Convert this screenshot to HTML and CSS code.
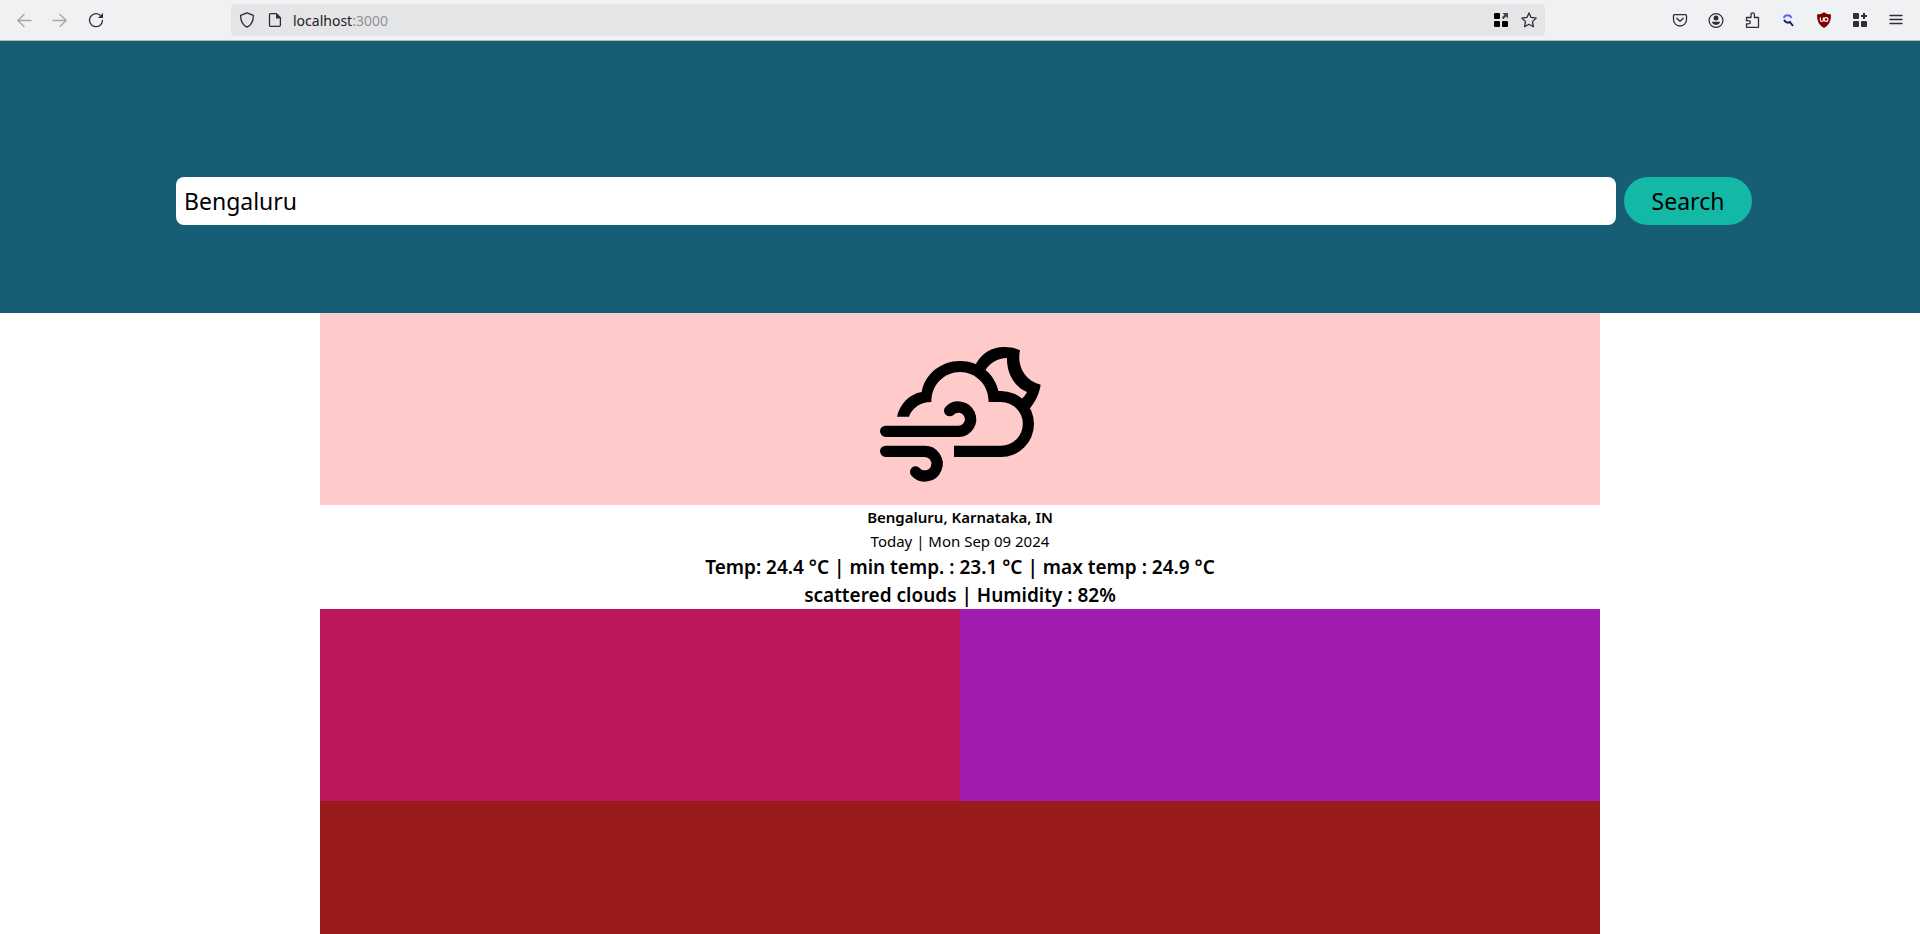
FILE: index.html
```
<!DOCTYPE html>
<html lang="en">
<head>
<meta charset="utf-8">
<title>Weather</title>
<link rel="stylesheet" href="styles.css">
</head>
<body>
<nav class="toolbar" aria-label="Browser toolbar">
  <div class="tool-group">
    <button class="tool faded" aria-label="Back"><svg viewBox="0 0 16 16"><path class="line" d="M15 8.500H1.800M8 2.500L1.800 8.500L8 14.500"/></svg></button>
    <button class="tool faded" aria-label="Forward"><svg viewBox="0 0 16 16"><path class="line" d="M1 8.500H14.200M8 2.500L14.200 8.500L8 14.500"/></svg></button>
    <button class="tool" aria-label="Reload"><svg viewBox="0 0 16 16"><path class="line" d="M12.200 3.200A6.500 6.500 0 1 0 14.500 8.500"/><path d="M15 1V6H10Z"/></svg></button>
  </div>
  <div class="urlbar">
    <button class="url-icon" aria-label="Tracking protection"><svg viewBox="0 0 16 16"><path class="line" d="M8 .8L14.4 3.4C14.4 9.2 12.4 13 8 15.2C3.6 13 1.6 9.2 1.6 3.4Z"/></svg></button>
    <button class="url-icon" aria-label="Site information"><svg viewBox="0 0 16 16"><path class="line" d="M3.6 1.7H9.5L13.4 5.6V13.3Q13.4 14.4 12.3 14.4H3.6Q2.5 14.4 2.5 13.3V2.8Q2.5 1.7 3.6 1.7Z"/><path d="M9 1.5V6.5H14Z"/></svg></button>
    <span class="address">localhost<span class="port">:3000</span></span>
    <button class="url-icon" aria-label="Open app"><svg class="solid" viewBox="0 0 16 16"><rect x="1" y="1" width="6" height="6" rx="1"/><rect x="1" y="9" width="6" height="6" rx="1"/><rect x="9" y="9" width="6" height="6" rx="1"/><path class="arrow" d="M9.5 1H15V6.5L13 4.6L10.4 7.2L8.8 5.6L11.4 3Z"/></svg></button>
    <button class="url-icon" aria-label="Bookmark"><svg viewBox="0 0 16 16"><path class="line" d="M8 .9L10.1 5.4L15.2 6.1L11.5 9.6L12.4 14.7L8 12.3L3.6 14.7L4.5 9.6L.8 6.1L5.9 5.4Z"/></svg></button>
  </div>
  <div class="tool-group">
    <button class="tool" aria-label="Pocket"><svg viewBox="0 0 16 16"><path class="line" d="M2.6 2.6H13.4Q14.5 2.6 14.5 3.7V7.5A6.5 6.5 0 0 1 1.5 7.5V3.7Q1.5 2.6 2.6 2.6ZM4.8 6.2L8 9.2L11.2 6.2"/></svg></button>
    <button class="tool" aria-label="Account"><svg viewBox="0 0 16 16"><circle class="line" cx="8" cy="8.5" r="6.9"/><circle cx="8" cy="6" r="2.5"/><path d="M4.8 9.7H11.2Q12.1 9.7 12.1 10.6Q11 13 8 13Q5 13 3.9 10.6Q3.9 9.7 4.8 9.7Z"/></svg></button>
    <button class="tool" aria-label="Extensions"><svg viewBox="0 0 16 16"><path class="line" d="M2.500 5.500H7V2.500Q7 .8 8.700 .8Q10.400 .8 10.400 2.500V5.500H14.500V15.300H2.500V11.900H4.500Q6.300 11.900 6.300 10.300Q6.300 8.700 4.500 8.700H2.500Z"/></svg></button>
    <button class="tool" aria-label="Search helper"><svg viewBox="0 0 16 16"><rect class="tile" width="16" height="16" rx="2"/><path class="lens-top" d="M3.800 6A4 4 0 0 1 11.400 6"/><path class="lens-base" d="M4.200 7.800A3.700 3.700 0 0 0 10.600 9.300M9.500 9.500L13 14"/></svg></button>
    <button class="tool" aria-label="uBlock Origin"><svg viewBox="0 0 16 16"><path class="ublock" d="M8 .2Q11 2.4 15 2.5Q15.4 12 8 16Q.6 12 1 2.5Q5 2.4 8 .2Z"/><path class="ublock-mark" d="M4.400 5.500V8A1.500 1.500 0 0 0 7.400 8V5.500"/><circle class="ublock-mark" cx="10" cy="7.500" r="1.900"/></svg></button>
    <button class="tool" aria-label="Add-ons"><svg viewBox="0 0 16 16"><rect x="1" y="1" width="6" height="6" rx="1"/><rect x="1" y="9" width="6" height="6" rx="1"/><rect x="9" y="9" width="6" height="6" rx="1"/><path d="M11 1H13V3H15V5H13V7H11V5H9V3H11Z"/></svg></button>
    <button class="tool" aria-label="Menu"><svg viewBox="0 0 16 16"><path class="line" d="M2 3.500H14M2 7.500H14M2 11.500H14"/></svg></button>
  </div>
</nav>
<header class="hero">
  <form class="search">
    <input class="search-input" type="text" aria-label="City" value="Bengaluru">
    <button class="search-button" type="button">Search</button>
  </form>
</header>
<main class="weather">
  <section class="picture">
    <svg class="weather-icon" viewBox="12 -51 576 576" role="img" aria-label="Windy and cloudy night">
      <path d="M111 260C120 222 148 192 185 186C194 133 242 93 300 93C358 93 405 132 415 183H423A99 99 0 0 1 423 381H282V347H423A65.500 65.500 0 0 0 423 216H386C386 162 345 126 300 126C255 126 214 162 214 216C182 216 156 234 147 260Z"/>
      <path d="M347 103C365 70 395 51 432 51C450 51 465 54 480 61C470 105 492 152 542 164C538 190 528 212 509 236L484 208C492 200 497 194 501 186C460 168 440 128 441 84C412 85 390 98 376 121Z"/>
      <path class="gust" d="M77 304H296A36.500 36.500 0 1 0 269 242"/>
      <path class="gust" d="M77 364H192A37 37 0 1 1 167 426"/>
    </svg>
  </section>
  <section class="details">
    <h1 class="place">Bengaluru, Karnataka, IN</h1>
    <p class="date">Today | Mon Sep 09 2024</p>
    <p class="reading">Temp: 24.4 °C | min temp. : 23.1 °C | max temp : 24.9 °C</p>
    <p class="reading">scattered clouds | Humidity : 82%</p>
  </section>
  <section class="panels">
    <div class="panel-pink"></div>
    <div class="panel-fuchsia"></div>
    <div class="panel-red"></div>
  </section>
</main>
</body>
</html>
```
FILE: styles.css
```
* {
  box-sizing: border-box;
}

body {
  margin: 0;
  min-height: 100vh;
  display: flex;
  flex-direction: column;
  background: #fff;
  color: #000;
  font-family: "Noto Sans", sans-serif;
}

button {
  border: 0;
  padding: 0;
  background: none;
  color: inherit;
  font: inherit;
}

/* Browser toolbar */
.toolbar {
  display: flex;
  align-items: center;
  justify-content: space-between;
  gap: 117px;
  height: 41px;
  padding: 0 6px;
  flex: none;
  background: #f0f1f3;
  border-bottom: 1px solid #b9babc;
  color: #2e2f34;
}

.tool-group {
  display: flex;
}

.tool {
  width: 36px;
  height: 36px;
  display: flex;
  align-items: center;
  justify-content: center;
}

.faded {
  color: #a5a6a8;
}

.toolbar svg {
  width: 16px;
  height: 16px;
  display: block;
  fill: currentColor;
}

.toolbar .line {
  fill: none;
  stroke: currentColor;
  stroke-width: 1.3;
  stroke-linecap: round;
  stroke-linejoin: round;
}

.urlbar {
  flex: 1;
  display: flex;
  align-items: center;
  height: 32px;
  padding: 0 2px;
  border-radius: 4px;
  background: #e4e5e7;
}

.url-icon {
  width: 28px;
  height: 28px;
  display: flex;
  align-items: center;
  justify-content: center;
}

.address {
  flex: 1;
  padding-left: 4px;
  font-size: 14px;
  color: #1f2024;
}

.port {
  color: #929395;
}

.solid {
  color: #000;
}

.arrow {
  fill: #45464b;
}

.tile {
  fill: #eef0fd;
}

.lens-top,
.lens-base {
  fill: none;
  stroke: #5967f5;
  stroke-width: 2;
}

.lens-base {
  stroke: #1b2244;
}

.ublock {
  fill: #800000;
}

.ublock-mark {
  fill: none;
  stroke: #fff;
  stroke-width: 1.2;
}

/* Search */
.hero {
  flex: none;
  padding: 136px 0 88px;
  background: #155e75;
}

.search {
  display: flex;
  justify-content: center;
}

.search-input {
  width: 75%;
  height: 48px;
  margin: 0 8px;
  padding: 0 8px;
  border: 0;
  border-radius: 8px;
  background: #fff;
  color: #000;
  font: 400 23px "Noto Sans", sans-serif;
}

.search-button {
  width: 128px;
  height: 48px;
  border-radius: 24px;
  background: #14b8a6;
  color: #000;
  font-size: 23px;
}

/* Weather */
.weather {
  flex: 1;
  display: flex;
  flex-direction: column;
  width: calc(100% * 2 / 3);
  margin: 0 auto;
}

.picture {
  display: flex;
  justify-content: center;
  background: #fecaca;
}

.weather-icon {
  width: 192px;
  height: 192px;
}

.gust {
  fill: none;
  stroke: #000;
  stroke-width: 34;
  stroke-linecap: round;
}

.details {
  text-align: center;
}

.place,
.date {
  margin: 0;
  font-size: 15px;
  line-height: 24px;
}

.place {
  font-weight: 600;
}

.reading {
  margin: 0;
  font-size: 19px;
  font-weight: 600;
  line-height: 28px;
}

.panels {
  flex: 1;
  display: grid;
  grid-template-columns: 1fr 1fr;
  grid-template-rows: 192px 1fr;
}

.panel-pink {
  background: #be185d;
}

.panel-fuchsia {
  background: #a21caf;
}

.panel-red {
  grid-column: 1 / -1;
  background: #991b1b;
}
```
